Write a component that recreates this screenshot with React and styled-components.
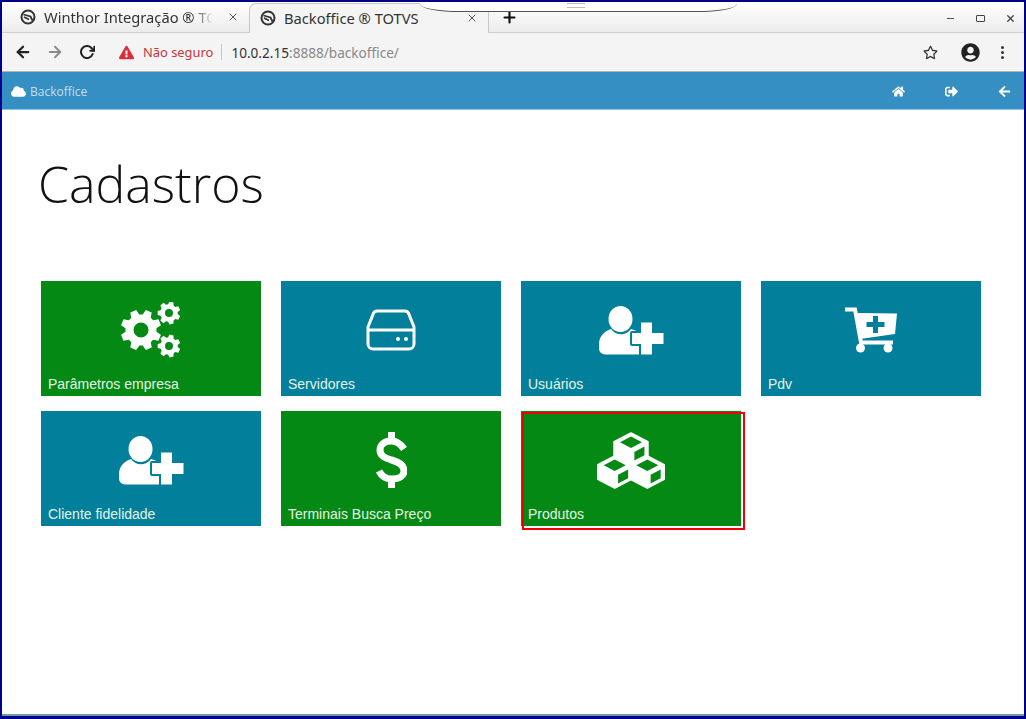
import React from "react";
import styled, { createGlobalStyle } from "styled-components";
import { FaHome, FaSignOutAlt, FaArrowLeft, FaCloud, FaRegStar, FaUserCircle, FaExclamationTriangle } from "react-icons/fa";
import { FiArrowLeft, FiArrowRight, FiRotateCw, FiX, FiMinus, FiPlus } from "react-icons/fi";

const BLUE = "#027f9a";
const GREEN = "#048a14";

const GlobalStyle = createGlobalStyle`
  html, body { margin: 0; padding: 0; background: #fff; }
  body { font-family: "Liberation Sans", Arial, sans-serif; }
`;

const Frame = styled.div`
  position: relative;
  box-sizing: border-box;
  width: 1026px;
  height: 719px;
  border: solid #00008b;
  border-width: 2px 2px 3px 2px;
  display: flex;
  flex-direction: column;
  overflow: hidden;
  background: #fff;
`;

const TabStrip = styled.div`
  height: 31px;
  flex: none;
  display: flex;
  align-items: flex-end;
  padding-left: 8px;
  background: linear-gradient(#ffffff, #ececec);
  border-bottom: 1px solid #cfcfcf;
  box-sizing: border-box;
`;

const Tab = styled.div`
  width: ${(p) => p.$width}px;
  height: 29px;
  box-sizing: border-box;
  display: flex;
  align-items: center;
  gap: 8px;
  padding: 0 10px 2px 10px;
  font-family: "Noto Sans", sans-serif;
  font-size: 14.7px;
  color: #333;
  white-space: nowrap;
  background: ${(p) => (p.$active ? "#f4f4f4" : "transparent")};
  ${(p) => p.$active && "border: 1px solid #c8c8c8; border-bottom: 0; border-radius: 7px 7px 0 0; margin-bottom: -1px; height: 30px;"}
`;

const TabTitle = styled.span`
  flex: 1;
  overflow: hidden;
  ${(p) => p.$fade && "mask-image: linear-gradient(90deg, #000 88%, transparent 100%);"}
`;

const NewTab = styled.div`
  margin-left: 12px;
  align-self: center;
  display: flex;
  color: #111;
  font-size: 17px;
`;

const WindowButtons = styled.div`
  margin-left: auto;
  display: flex;
  align-items: center;
  align-self: center;
  gap: 20px;
  padding: 2px 8px 0 0;
  color: #444;
  font-size: 11px;
`;

const Maximize = styled.span`
  width: 7px;
  height: 5px;
  border: 1.5px solid #444;
  border-radius: 1px;
`;

const Dropdown = styled.div`
  position: absolute;
  left: 418px;
  top: -2px;
  width: 317px;
  height: 11px;
  background: #fff;
  border-bottom: 1px solid #555;
  border-radius: 0 0 40px 40px / 0 0 8px 8px;
  display: flex;
  justify-content: center;
`;

const Grip = styled.span`
  width: 18px;
  height: 3px;
  margin: 3px 0 0 -6px;
  border-top: 1px solid #bbb;
  border-bottom: 1px solid #bbb;
`;

const Toolbar = styled.div`
  height: 39px;
  flex: none;
  box-sizing: border-box;
  display: flex;
  align-items: center;
  padding: 0 20px 0 12px;
  background: #f4f4f4;
  border-bottom: 1px solid #b9b6b0;
`;

const NavButton = styled.span`
  display: flex;
  font-size: 18px;
  width: 32px;
  color: ${(p) => (p.$muted ? "#8a8a8a" : "#222")};
`;

const ReloadButton = styled(NavButton)`
  font-size: 16px;
  width: 30px;
  margin-left: 1px;
`;

const Security = styled.div`
  margin-left: 10px;
  display: flex;
  align-items: center;
  gap: 9px;
  font-family: "Noto Sans", sans-serif;
  font-size: 12.9px;
  color: #c8353b;
`;

const Divider = styled.span`
  width: 1px;
  height: 16px;
  margin: 0 9px 0 8px;
  background: #c4c4c4;
`;

const Url = styled.div`
  font-family: "Noto Sans", sans-serif;
  font-size: 13.6px;
  color: #888;
  b { font-weight: 400; color: #333; }
`;

const ToolbarRight = styled.div`
  margin-left: auto;
  display: flex;
  align-items: center;
  color: #333;
`;

const Account = styled.span`
  display: flex;
  margin: 0 21px 0 23px;
  font-size: 19px;
  color: #222;
`;

const Dots = styled.span`
  display: flex;
  flex-direction: column;
  gap: 2px;
  i { width: 3px; height: 3px; border-radius: 50%; background: #333; }
`;

const AppBar = styled.header`
  height: 38px;
  flex: none;
  box-sizing: border-box;
  display: flex;
  align-items: center;
  padding: 1px 13px 0 9px;
  color: #fff;
  background: #358fc3;
  border-bottom: 1px solid #8cc6e6;
`;

const Brand = styled.div`
  display: flex;
  align-items: center;
  gap: 4px;
  font-family: "Open Sans", sans-serif;
  font-size: 12px;
  color: #c3dfef;
  svg { color: #fff; font-size: 15px; }
`;

const AppActions = styled.nav`
  margin-left: auto;
  display: flex;
  align-items: center;
  gap: 40px;
  font-size: 13px;
`;

const Main = styled.main`
  flex: 1;
  padding: 37px 0 0 39px;
`;

const Title = styled.h1`
  margin: 0 0 60px -3px;
  font-family: "Open Sans", sans-serif;
  font-weight: 300;
  font-size: 50px;
  line-height: 74px;
  color: #111;
`;

const Grid = styled.div`
  display: grid;
  grid-template-columns: repeat(4, 220px);
  grid-auto-rows: 115px;
  gap: 15px 20px;
`;

const Tile = styled.div`
  position: relative;
  display: flex;
  flex-direction: column;
  color: #fff;
  background: ${(p) => (p.$tone === "green" ? GREEN : BLUE)};
`;

const TileIcon = styled.div`
  flex: 1;
  display: flex;
  align-items: center;
  justify-content: center;
  padding-top: 3px;
`;

const TileLabel = styled.div`
  padding: 0 0 3px 7px;
  font-size: 14px;
  line-height: 17px;
  color: #e4f3e6;
`;

const Highlight = styled.div`
  position: absolute;
  left: 1px;
  top: 1px;
  right: -4px;
  bottom: -4px;
  border: 2px solid #f00000;
`;

const BottomEdge = styled.div`
  height: 2px;
  flex: none;
  background: #6f9aa8;
`;

// toothed wheel with a hole, evenly spaced teeth
const gearPath = (cx, cy, r, hole, teeth = 8) => {
  const inner = r * 0.76;
  const step = (Math.PI * 2) / teeth;
  const pts = [];
  for (let i = 0; i < teeth; i++) {
    const a = i * step + step / 2;
    const at = (rad, off) => `${(cx + rad * Math.cos(a + off)).toFixed(2)} ${(cy + rad * Math.sin(a + off)).toFixed(2)}`;
    pts.push(at(inner, -step * 0.36), at(r, -step * 0.2), at(r, step * 0.2), at(inner, step * 0.36));
  }
  const ring = `M${cx - hole} ${cy}a${hole} ${hole} 0 1 0 ${hole * 2} 0a${hole} ${hole} 0 1 0 ${-hole * 2} 0z`;
  return `M${pts.join("L")}z${ring}`;
};

const GearsIcon = () => (
  <svg width="60" height="56" viewBox="0 0 60 56" fill="#fff" fillRule="evenodd">
    <path d={gearPath(20, 28, 20.5, 7.5)} />
    <path d={gearPath(48, 11, 11.5, 4, 7)} />
    <path d={gearPath(48, 44, 11.5, 4, 7)} />
  </svg>
);

const DiskIcon = () => (
  <svg width="50" height="42" viewBox="0 0 50 42" fill="none" stroke="#fff" strokeWidth="3">
    <path d="M11 2h28a4 4 0 0 1 3.600 2.400L48 18v17a5 5 0 0 1-5 5H7a5 5 0 0 1-5-5V18L7.400 4.400A4 4 0 0 1 11 2z" />
    <path d="M3 21h44" />
    <circle cx="32" cy="30" r="2" fill="#fff" stroke="none" />
    <circle cx="40" cy="30" r="2" fill="#fff" stroke="none" />
  </svg>
);

const UserPlusIcon = () => (
  <svg width="65" height="49" viewBox="0 0 65 49" fill="#fff">
    <ellipse cx="21.500" cy="13" rx="12" ry="13" />
    <path d="M12 23C17 30 27 30 32 23C36 24 40 26 43 29V48.500H6a6 6 0 0 1-6-6V38C0 30 6 25 12 23z" />
    <path
      d="M42 16.500h11V27h11.500v11H53v10.500H42V38H33V27h9z"
      stroke={BLUE}
      strokeWidth="4"
      strokeLinejoin="round"
      paintOrder="stroke"
    />
  </svg>
);

const CartIcon = () => (
  <svg width="52" height="46" viewBox="0 0 52 46">
    <path d="M11 6L52 6.500L50 27L15 32z" fill="#fff" />
    <path d="M0 2.500H10L16 35.500H48" fill="none" stroke="#fff" strokeWidth="4" />
    <circle cx="15.500" cy="41" r="4.500" fill="#fff" />
    <circle cx="43" cy="41" r="4.500" fill="#fff" />
    <path d="M28 9h5v6h6.500v5H33v6h-5v-6h-6.500v-5H28z" fill={BLUE} />
  </svg>
);

const DollarIcon = () => (
  <svg width="31" height="56" viewBox="0 0 31 56" fill="none" stroke="#fff" strokeWidth="7">
    <path d="M28 17C24 11 20 9 15.500 9C8 9 4 13 4 18C4 24 9 26 15.500 28C23 30 28 33 28 39C28 44 23 47 15.500 47C10 47 6 45 3 39" />
    <path d="M15.500 0V9M15.500 47V56" />
  </svg>
);

// one block of the stack: white body, dark top and right faces
const Block = ({ x, y }) => (
  <g transform={`translate(${x} ${y})`}>
    <path d="M17.500 0L35 9V24L17.500 33L0 24V9z" fill="#fff" stroke="#fff" strokeWidth="2" strokeLinejoin="round" />
    <path d="M17.500 3.500L29 9.500L17.500 15.500L6 9.500z" fill={GREEN} />
    <path d="M31.500 14V23L21 28.500V19.500z" fill={GREEN} />
  </g>
);

const BlocksIcon = () => (
  <svg width="68" height="57" viewBox="-1 -1 71 59">
    <Block x={17} y={0} />
    <Block x={0} y={24} />
    <Block x={34} y={24} />
  </svg>
);

const items = [
  { label: "Parâmetros empresa", tone: "green", icon: <GearsIcon /> },
  { label: "Servidores", tone: "blue", icon: <DiskIcon /> },
  { label: "Usuários", tone: "blue", icon: <UserPlusIcon /> },
  { label: "Pdv", tone: "blue", icon: <CartIcon /> },
  { label: "Cliente fidelidade", tone: "blue", icon: <UserPlusIcon /> },
  { label: "Terminais Busca Preço", tone: "green", icon: <DollarIcon /> },
  { label: "Produtos", tone: "green", icon: <BlocksIcon />, marked: true },
];

const TabLogo = () => (
  <svg width="16" height="16" viewBox="0 0 16 16" fill="none" stroke="#333" strokeWidth="2" style={{ flex: "none" }}>
    <circle cx="8" cy="8" r="6.500" />
    <path d="M3.500 5.500l7 2 2 4M4 8l5 2.500" strokeWidth="1.800" />
  </svg>
);

export default function App() {
  return (
    <Frame>
      <GlobalStyle />
      <TabStrip>
        <Tab $width={239}>
          <TabLogo />
          <TabTitle $fade>Winthor Integração ® TOTVS</TabTitle>
          <FiX size={12} color="#555" style={{ marginLeft: 6 }} />
        </Tab>
        <Tab $active $width={240}>
          <TabLogo />
          <TabTitle>Backoffice ® TOTVS</TabTitle>
          <FiX size={12} color="#555" />
        </Tab>
        <NewTab><FiPlus strokeWidth={3} /></NewTab>
        <WindowButtons>
          <FiMinus />
          <Maximize />
          <FiX strokeWidth={3} />
        </WindowButtons>
      </TabStrip>
      <Dropdown><Grip /></Dropdown>
      <Toolbar>
        <NavButton><FiArrowLeft strokeWidth={3} /></NavButton>
        <NavButton $muted><FiArrowRight strokeWidth={2.500} /></NavButton>
        <ReloadButton><FiRotateCw strokeWidth={3} /></ReloadButton>
        <Security>
          <FaExclamationTriangle size={15} color="#d8303a" />
          Não seguro
        </Security>
        <Divider />
        <Url><b>10.0.2.15</b>:8888/backoffice/</Url>
        <ToolbarRight>
          <FaRegStar size={15} />
          <Account><FaUserCircle /></Account>
          <Dots><i /><i /><i /></Dots>
        </ToolbarRight>
      </Toolbar>
      <AppBar>
        <Brand><FaCloud />Backoffice</Brand>
        <AppActions>
          <FaHome />
          <FaSignOutAlt />
          <FaArrowLeft />
        </AppActions>
      </AppBar>
      <Main>
        <Title>Cadastros</Title>
        <Grid>
          {items.map((item) => (
            <Tile key={item.label} $tone={item.tone}>
              <TileIcon>{item.icon}</TileIcon>
              <TileLabel>{item.label}</TileLabel>
              {item.marked && <Highlight />}
            </Tile>
          ))}
        </Grid>
      </Main>
      <BottomEdge />
    </Frame>
  );
}
